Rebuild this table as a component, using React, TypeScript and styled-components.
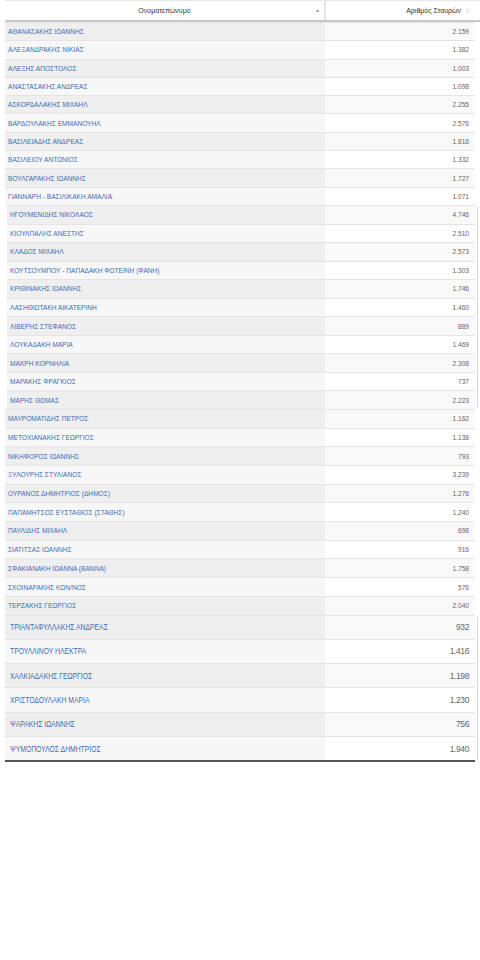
import React from "react";
import styled, { createGlobalStyle } from "styled-components";

type Row = [string, string];

const segments: { rows: Row[]; indent: number; rowHeight: number; big?: boolean; edge?: boolean }[] = [
  {
    indent: 5,
    rowHeight: 18.3,
    rows: [
      ["ΑΘΑΝΑΣΑΚΗΣ ΙΩΑΝΝΗΣ", "2.159"],
      ["ΑΛΕΞΑΝΔΡΑΚΗΣ ΝΙΚΙΑΣ", "1.382"],
      ["ΑΛΕΞΗΣ ΑΠΟΣΤΟΛΟΣ", "1.003"],
      ["ΑΝΑΣΤΑΣΑΚΗΣ ΑΝΔΡΕΑΣ", "1.098"],
      ["ΑΣΚΟΡΔΑΛΑΚΗΣ ΜΙΧΑΗΛ", "2.255"],
      ["ΒΑΡΔΟΥΛΑΚΗΣ ΕΜΜΑΝΟΥΗΛ", "2.576"],
      ["ΒΑΣΙΛΕΙΑΔΗΣ ΑΝΔΡΕΑΣ", "1.818"],
      ["ΒΑΣΙΛΕΙΟΥ ΑΝΤΩΝΙΟΣ", "1.332"],
      ["ΒΟΥΛΓΑΡΑΚΗΣ ΙΩΑΝΝΗΣ", "1.727"],
      ["ΓΙΑΝΝΑΡΗ - ΒΑΣΙΛΙΚΑΚΗ ΑΜΑΛΙΑ", "1.071"],
    ],
  },
  {
    indent: 7,
    rowHeight: 18.55,
    edge: true,
    rows: [
      ["ΗΓΟΥΜΕΝΙΔΗΣ ΝΙΚΟΛΑΟΣ", "4.746"],
      ["ΚΙΟΥΛΠΑΛΗΣ ΑΝΕΣΤΗΣ", "2.510"],
      ["ΚΛΑΔΟΣ ΜΙΧΑΗΛ", "2.573"],
      ["ΚΟΥΤΣΟΥΜΠΟΥ - ΠΑΠΑΔΑΚΗ ΦΩΤΕΙΝΗ (ΦΑΝΗ)", "1.303"],
      ["ΚΡΙΘΙΝΑΚΗΣ ΙΩΑΝΝΗΣ", "1.746"],
      ["ΛΑΣΗΘΙΩΤΑΚΗ ΑΙΚΑΤΕΡΙΝΗ", "1.460"],
      ["ΛΙΒΕΡΗΣ ΣΤΕΦΑΝΟΣ", "889"],
      ["ΛΟΥΚΑΔΑΚΗ ΜΑΡΙΑ", "1.469"],
      ["ΜΑΚΡΗ ΚΟΡΝΗΛΙΑ", "2.308"],
      ["ΜΑΡΑΚΗΣ ΦΡΑΓΚΙΟΣ", "737"],
      ["ΜΑΡΗΣ ΘΩΜΑΣ", "2.223"],
    ],
  },
  {
    indent: 5,
    rowHeight: 18.7,
    rows: [
      ["ΜΑΥΡΟΜΑΤΙΔΗΣ ΠΕΤΡΟΣ", "1.162"],
      ["ΜΕΤΟΧΙΑΝΑΚΗΣ ΓΕΩΡΓΙΟΣ", "1.138"],
      ["ΝΙΚΗΦΟΡΟΣ ΙΩΑΝΝΗΣ", "793"],
      ["ΞΥΛΟΥΡΗΣ ΣΤΥΛΙΑΝΟΣ", "3.239"],
      ["ΟΥΡΑΝΟΣ ΔΗΜΗΤΡΙΟΣ (ΔΗΜΟΣ)", "1.276"],
      ["ΠΑΠΑΜΗΤΣΟΣ ΕΥΣΤΑΘΙΟΣ (ΣΤΑΘΗΣ)", "1.240"],
      ["ΠΑΥΛΙΔΗΣ ΜΙΧΑΗΛ", "698"],
      ["ΣΙΑΤΙΤΣΑΣ ΙΩΑΝΝΗΣ", "916"],
      ["ΣΦΑΚΙΑΝΑΚΗ ΙΩΑΝΝΑ (ΒΑΝΝΑ)", "1.758"],
      ["ΣΧΟΙΝΑΡΑΚΗΣ ΚΩΝ/ΝΟΣ", "576"],
      ["ΤΕΡΖΑΚΗΣ ΓΕΩΡΓΙΟΣ", "2.040"],
    ],
  },
  {
    indent: 5,
    rowHeight: 24.3,
    big: true,
    edge: true,
    rows: [
      ["ΤΡΙΑΝΤΑΦΥΛΛΑΚΗΣ ΑΝΔΡΕΑΣ", "932"],
      ["ΤΡΟΥΛΛΙΝΟΥ ΗΛΕΚΤΡΑ", "1.416"],
      ["ΧΑΛΚΙΑΔΑΚΗΣ ΓΕΩΡΓΙΟΣ", "1.198"],
      ["ΧΡΙΣΤΟΔΟΥΛΑΚΗ ΜΑΡΙΑ", "1.230"],
      ["ΨΑΡΑΚΗΣ ΙΩΑΝΝΗΣ", "756"],
      ["ΨΥΜΟΠΟΥΛΟΣ ΔΗΜΗΤΡΙΟΣ", "1.940"],
    ],
  },
];

export default function App() {
  return (
    <>
      <GlobalStyle />
      <Page>
        <Header>
          <HeadCell $main>
            Ονοματεπώνυμο
            <SortUp>▲</SortUp>
          </HeadCell>
          <HeadCell>
            Αριθμός Σταυρών
            <SortBoth>⇕</SortBoth>
          </HeadCell>
        </Header>
        {segments.map((seg, i) => (
          <Segment key={i} $indent={seg.indent} $edge={!!seg.edge} $last={i === segments.length - 1}>
            {seg.rows.map(([name, votes], j) => (
              <TableRow key={name} $h={seg.rowHeight} $odd={j % 2 === 0}>
                <NameCell $big={!!seg.big}>
                  <NameLink href="#" $big={!!seg.big}>{name}</NameLink>
                </NameCell>
                <VoteCell $big={!!seg.big}>{votes}</VoteCell>
              </TableRow>
            ))}
          </Segment>
        ))}
      </Page>
    </>
  );
}

const GlobalStyle = createGlobalStyle`
  body {
    margin: 0;
    background: #ffffff;
    font-family: "Liberation Sans", Arial, sans-serif;
  }
`;
const Page = styled.div`
  width: 480px;
  height: 960px;
  background: #ffffff;
`;
const Header = styled.div`
  display: grid;
  grid-template-columns: 320px 150px;
  margin-left: 5px;
  height: 22px;
  border-top: 1px solid #e8e8e8;
  border-bottom: 2px solid #c8c8c8;
  box-sizing: border-box;
`;
const HeadCell = styled.div<{ $main?: boolean }>`
  position: relative;
  display: flex;
  align-items: center;
  justify-content: ${({ $main }) => ($main ? "center" : "flex-end")};
  padding-right: ${({ $main }) => ($main ? "0" : "14px")};
  font-size: 7px;
  color: #333;
  border-right: ${({ $main }) => ($main ? "1px solid #e2e2e2" : "none")};
  border-left: ${({ $main }) => ($main ? "none" : "1px solid #e8e8e8")};
`;
const SortUp = styled.span`
  position: absolute;
  right: 4px;
  top: 6px;
  font-size: 5px;
  color: #8a9bb8;
`;
const SortBoth = styled.span`
  position: absolute;
  right: 5px;
  top: 6px;
  font-size: 6px;
  color: #d0d0d0;
`;
const Segment = styled.div<{ $indent: number; $edge: boolean; $last: boolean }>`
  margin-left: ${({ $indent }) => $indent}px;
  width: ${({ $indent }) => 475 - $indent}px;
  border-bottom: ${({ $last }) => ($last ? "2px solid #555" : "none")};
  box-shadow: ${({ $edge }) => ($edge ? "4px 0 0 -2px #fff, 5px 0 0 -2px #d8d8d8" : "none")};
`;
const TableRow = styled.div<{ $h: number; $odd: boolean }>`
  display: grid;
  grid-template-columns: calc(100% - 150px) 150px;
  height: ${({ $h }) => $h}px;
  box-sizing: border-box;
  border-top: 1px solid #e4e4e4;
  background: ${({ $odd }) => ($odd ? "#f9f9f9" : "#ffffff")};
  & > :first-child {
    background: ${({ $odd }) => ($odd ? "#efefef" : "#f7f7f7")};
  }
`;
const NameCell = styled.div<{ $big: boolean }>`
  display: flex;
  align-items: center;
  padding-left: ${({ $big }) => ($big ? "5px" : "3px")};
  font-size: ${({ $big }) => ($big ? "8.5px" : "6.6px")};
`;
const NameLink = styled.a<{ $big: boolean }>`
  display: inline-block;
  color: #3b6db3;
  text-decoration: none;
  white-space: nowrap;
  transform: ${({ $big }) => ($big ? "scaleX(0.8)" : "none")};
  transform-origin: left center;
`;
const VoteCell = styled.div<{ $big: boolean }>`
  display: flex;
  align-items: center;
  justify-content: flex-end;
  padding-right: 6px;
  font-size: ${({ $big }) => ($big ? "8.5px" : "6.6px")};
  letter-spacing: ${({ $big }) => ($big ? "-0.4px" : "0")};
  color: #666;
`;
